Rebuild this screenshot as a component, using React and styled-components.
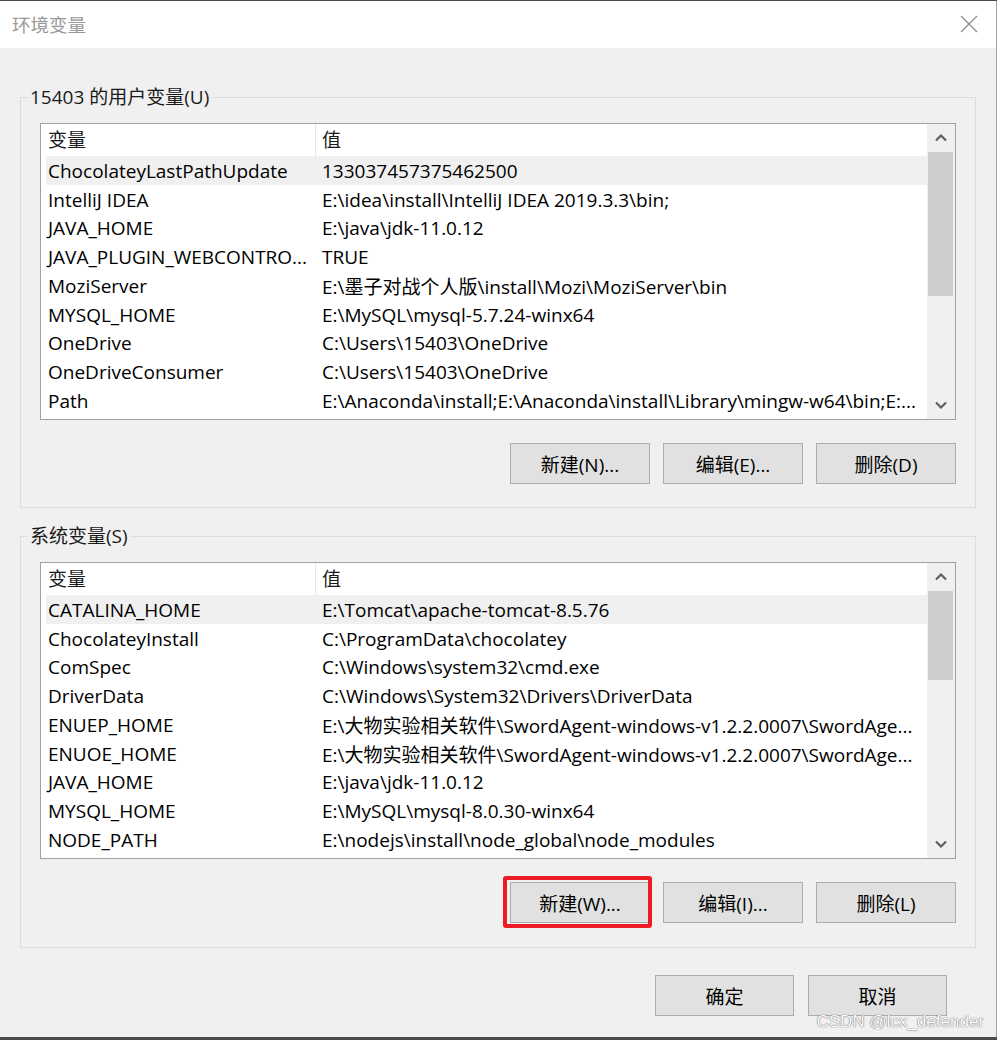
import React from "react";
import styled, { createGlobalStyle } from "styled-components";

const userVars = [
  ["ChocolateyLastPathUpdate", "133037457375462500"],
  ["IntelliJ IDEA", "E:\\idea\\install\\IntelliJ IDEA 2019.3.3\\bin;"],
  ["JAVA_HOME", "E:\\java\\jdk-11.0.12"],
  ["JAVA_PLUGIN_WEBCONTRO...", "TRUE"],
  ["MoziServer", "E:\\墨子对战个人版\\install\\Mozi\\MoziServer\\bin"],
  ["MYSQL_HOME", "E:\\MySQL\\mysql-5.7.24-winx64"],
  ["OneDrive", "C:\\Users\\15403\\OneDrive"],
  ["OneDriveConsumer", "C:\\Users\\15403\\OneDrive"],
  ["Path", "E:\\Anaconda\\install;E:\\Anaconda\\install\\Library\\mingw-w64\\bin;E:..."],
];

const systemVars = [
  ["CATALINA_HOME", "E:\\Tomcat\\apache-tomcat-8.5.76"],
  ["ChocolateyInstall", "C:\\ProgramData\\chocolatey"],
  ["ComSpec", "C:\\Windows\\system32\\cmd.exe"],
  ["DriverData", "C:\\Windows\\System32\\Drivers\\DriverData"],
  ["ENUEP_HOME", "E:\\大物实验相关软件\\SwordAgent-windows-v1.2.2.0007\\SwordAge..."],
  ["ENUOE_HOME", "E:\\大物实验相关软件\\SwordAgent-windows-v1.2.2.0007\\SwordAge..."],
  ["JAVA_HOME", "E:\\java\\jdk-11.0.12"],
  ["MYSQL_HOME", "E:\\MySQL\\mysql-8.0.30-winx64"],
  ["NODE_PATH", "E:\\nodejs\\install\\node_global\\node_modules"],
];

const Chevron = ({ down }) => (
  <svg width="12" height="8" viewBox="0 0 12 8">
    <polyline
      points={down ? "1,1.5 6,6.5 11,1.5" : "1,6.5 6,1.5 11,6.5"}
      fill="none"
      stroke="#606060"
      strokeWidth="2.2"
    />
  </svg>
);

const VarList = ({ rows, thumb }) => (
  <ListView>
    <ListBody>
      <HeaderRow>
        <HeadCell first>变量</HeadCell>
        <HeadCell>值</HeadCell>
      </HeaderRow>
      {rows.map(([name, value], i) => (
        <Row key={i} selected={i === 0}>
          <NameCell>{name}</NameCell>
          <ValueCell>{value}</ValueCell>
        </Row>
      ))}
    </ListBody>
    <ScrollBar>
      <ScrollButton>
        <Chevron />
      </ScrollButton>
      <Track>
        <Thumb style={{ height: thumb }} />
      </Track>
      <ScrollButton>
        <Chevron down />
      </ScrollButton>
    </ScrollBar>
  </ListView>
);

export default function App() {
  return (
    <>
      <GlobalStyle />
      <Window>
        <TitleBar>
          <Title>环境变量</Title>
          <CloseIcon width="18" height="18" viewBox="0 0 18 18">
            <path d="M1 1 L17 17 M17 1 L1 17" stroke="#8c8c8c" strokeWidth="1.2" />
          </CloseIcon>
        </TitleBar>
        <Body>
          <Group>
            <Legend>15403 的用户变量(U)</Legend>
            <VarList rows={userVars} thumb={144} />
            <ButtonRow>
              <Button>新建(N)...</Button>
              <Button>编辑(E)...</Button>
              <Button>删除(D)</Button>
            </ButtonRow>
          </Group>
          <Group second>
            <Legend>系统变量(S)</Legend>
            <VarList rows={systemVars} thumb={89} />
            <ButtonRow>
              <Marked>
                <Button>新建(W)...</Button>
              </Marked>
              <Button>编辑(I)...</Button>
              <Button>删除(L)</Button>
            </ButtonRow>
          </Group>
          <Footer>
            <Button narrow>确定</Button>
            <Button narrow>取消</Button>
          </Footer>
          <Watermark>CSDN @lcx_defender</Watermark>
        </Body>
      </Window>
    </>
  );
}

const GlobalStyle = createGlobalStyle`
  html, body {
    margin: 0;
    padding: 0;
    background: #4a4a4a;
  }
  body {
    font-family: "Open Sans", "Noto Sans CJK SC", sans-serif;
    color: #000;
  }
`;

const Window = styled.div`
  position: relative;
  margin-top: 1px;
  width: 996px;
  height: 1036px;
  background: #f0f0f0;
  border-right: 1px solid #a0a0a0;
  display: flex;
  flex-direction: column;
  overflow: hidden;
`;

const TitleBar = styled.div`
  height: 45px;
  flex: none;
  background: #fff;
  display: flex;
  align-items: center;
  justify-content: space-between;
  padding: 0 18px 2px 12px;
`;

const Title = styled.div`
  font-size: 18.5px;
  color: #999;
`;

const CloseIcon = styled.svg`
  display: block;
`;

const Body = styled.div`
  flex: 1;
  display: flex;
  flex-direction: column;
  padding-top: 37px;
`;

const Group = styled.fieldset`
  margin: ${p => (p.second ? "16px" : "0")} 20px 0 20px;
  padding: 14px 19px ${p => (p.second ? "24px" : "23px")} 19px;
  border: 1px solid #dcdcdc;
  min-width: 0;
`;

const Legend = styled.legend`
  font-size: 19px;
  line-height: 24px;
  padding: 0 2px;
  margin-left: -12px;
  color: #1a1a1a;
`;

const ListView = styled.div`
  height: 297px;
  box-sizing: border-box;
  border: 1px solid #a0a0a0;
  background: #fff;
  display: flex;
`;

const ListBody = styled.div`
  flex: 1;
  min-width: 0;
  padding-left: 5px;
  overflow: hidden;
`;

const HeaderRow = styled.div`
  height: 32px;
  display: flex;
`;

const HeadCell = styled.div`
  width: ${p => (p.first ? "270px" : "auto")};
  flex: ${p => (p.first ? "none" : "1")};
  box-sizing: border-box;
  padding-left: ${p => (p.first ? "2px" : "6px")};
  border-right: ${p => (p.first ? "1px solid #e5e5e5" : "none")};
  font-size: 19px;
  line-height: 32px;
  color: #1a1a1a;
`;

const Row = styled.div`
  height: 28.75px;
  box-sizing: border-box;
  padding-top: 1px;
  display: flex;
  align-items: center;
  background: ${p => (p.selected ? "#f0f0f0" : "transparent")};
  font-size: 19px;
  white-space: nowrap;
`;

const NameCell = styled.div`
  width: 270px;
  flex: none;
  box-sizing: border-box;
  padding-left: 2px;
  overflow: hidden;
`;

const ValueCell = styled.div`
  flex: 1;
  min-width: 0;
  padding-left: 6px;
  overflow: hidden;
`;

const ScrollBar = styled.div`
  width: 28px;
  flex: none;
  background: #f0f0f0;
  display: flex;
  flex-direction: column;
`;

const ScrollButton = styled.div`
  height: 28px;
  flex: none;
  display: flex;
  align-items: center;
  justify-content: center;
`;

const Track = styled.div`
  flex: 1;
  padding: 0 2px 0 1px;
`;

const Thumb = styled.div`
  background: #cdcdcd;
`;

const ButtonRow = styled.div`
  margin-top: 23px;
  display: flex;
  justify-content: flex-end;
  gap: 13px;
`;

const Button = styled.button`
  width: ${p => (p.narrow ? "139px" : "140px")};
  height: 41px;
  box-sizing: border-box;
  background: #e1e1e1;
  border: 1px solid #adadad;
  border-radius: 0;
  padding: 0;
  font-family: inherit;
  font-size: 19px;
  color: #000;
`;

const Marked = styled.div`
  position: relative;
  display: flex;

  &::after {
    content: "";
    position: absolute;
    left: -7px;
    top: -6px;
    right: -2px;
    bottom: -5px;
    border: 4px solid #ec1c24;
    border-radius: 3px;
    pointer-events: none;
  }
`;

const Footer = styled.div`
  margin-top: 27px;
  padding-right: 49px;
  display: flex;
  justify-content: flex-end;
  gap: 14px;
`;

const Watermark = styled.div`
  position: absolute;
  right: 12px;
  bottom: 5px;
  font-family: "Liberation Sans", sans-serif;
  font-size: 17px;
  color: #fff;
  text-shadow: 0 0 1px #666, 0 0 1px #666;
`;
